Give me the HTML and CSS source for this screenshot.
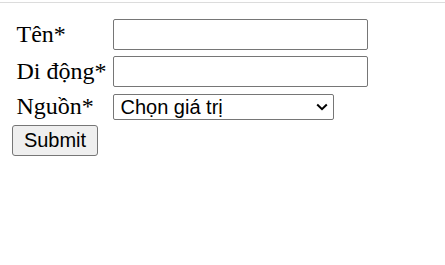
FILE: index.html
```html
<!DOCTYPE html>
<html lang="vi">
<head>
<meta charset="utf-8">
<title>Form</title>
<link rel="stylesheet" href="styles.css">
</head>
<body>
<div class="rule"></div>
<form class="page">
  <div class="fields">
    <label class="lbl" for="ten">Tên*</label>
    <input class="txt" id="ten" type="text">
    <label class="lbl" for="dd">Di động*</label>
    <input class="txt" id="dd" type="text">
    <label class="lbl" for="ng">Nguồn*</label>
    <span class="selwrap">
      <select class="sel" id="ng"><option>Chọn giá trị</option></select>
      <svg class="chev" width="12" height="8" viewBox="0 0 12 8"><path d="M1.2 1.5 L6 6.2 L10.8 1.5" fill="none" stroke="#000" stroke-width="2"/></svg>
    </span>
  </div>
  <button class="btn" type="button">Submit</button>
</form>
</body>
</html>
```
FILE: styles.css
```css
html, body {
  margin: 0;
  padding: 0;
  background: #fff;
}
.rule {
  height: 1px;
  margin-top: 2px;
  background: #dcdcdc;
}
.page {
  display: flex;
  flex-direction: column;
  align-items: flex-start;
  padding: 11.5px 12px;
}
.fields {
  display: grid;
  grid-template-columns: 90px auto;
  column-gap: 6px;
  row-gap: 6px;
  align-items: center;
  padding: 4.5px;
}
.lbl {
  font-family: "Liberation Serif", "Times New Roman", serif;
  font-size: 24px;
  color: #000;
  line-height: 27.5px;
  white-space: nowrap;
}
.txt {
  box-sizing: border-box;
  width: 255px;
  height: 31px;
  margin: 0;
  border: 1px solid #767676;
  border-radius: 2px;
  padding: 1px 3px;
  font-family: "Liberation Sans", Arial, sans-serif;
  font-size: 20px;
  background: #fff;
}
.selwrap {
  position: relative;
  display: inline-flex;
  width: 221px;
}
.sel {
  appearance: none;
  -webkit-appearance: none;
  box-sizing: border-box;
  width: 221px;
  height: 26px;
  margin: 0;
  border: 1px solid #767676;
  border-radius: 2px;
  padding: 0 0 0 7px;
  font-family: "Liberation Sans", Arial, sans-serif;
  font-size: 20px;
  color: #000;
  background: #fff;
}
.chev {
  position: absolute;
  right: 6px;
  top: 9px;
  pointer-events: none;
}
.btn {
  box-sizing: border-box;
  width: 86px;
  height: 31px;
  margin: 0;
  padding: 0;
  border: 1px solid #767676;
  border-radius: 3px;
  background: #efefef;
  font-family: "Liberation Sans", Arial, sans-serif;
  font-size: 20px;
  color: #000;
}
```
